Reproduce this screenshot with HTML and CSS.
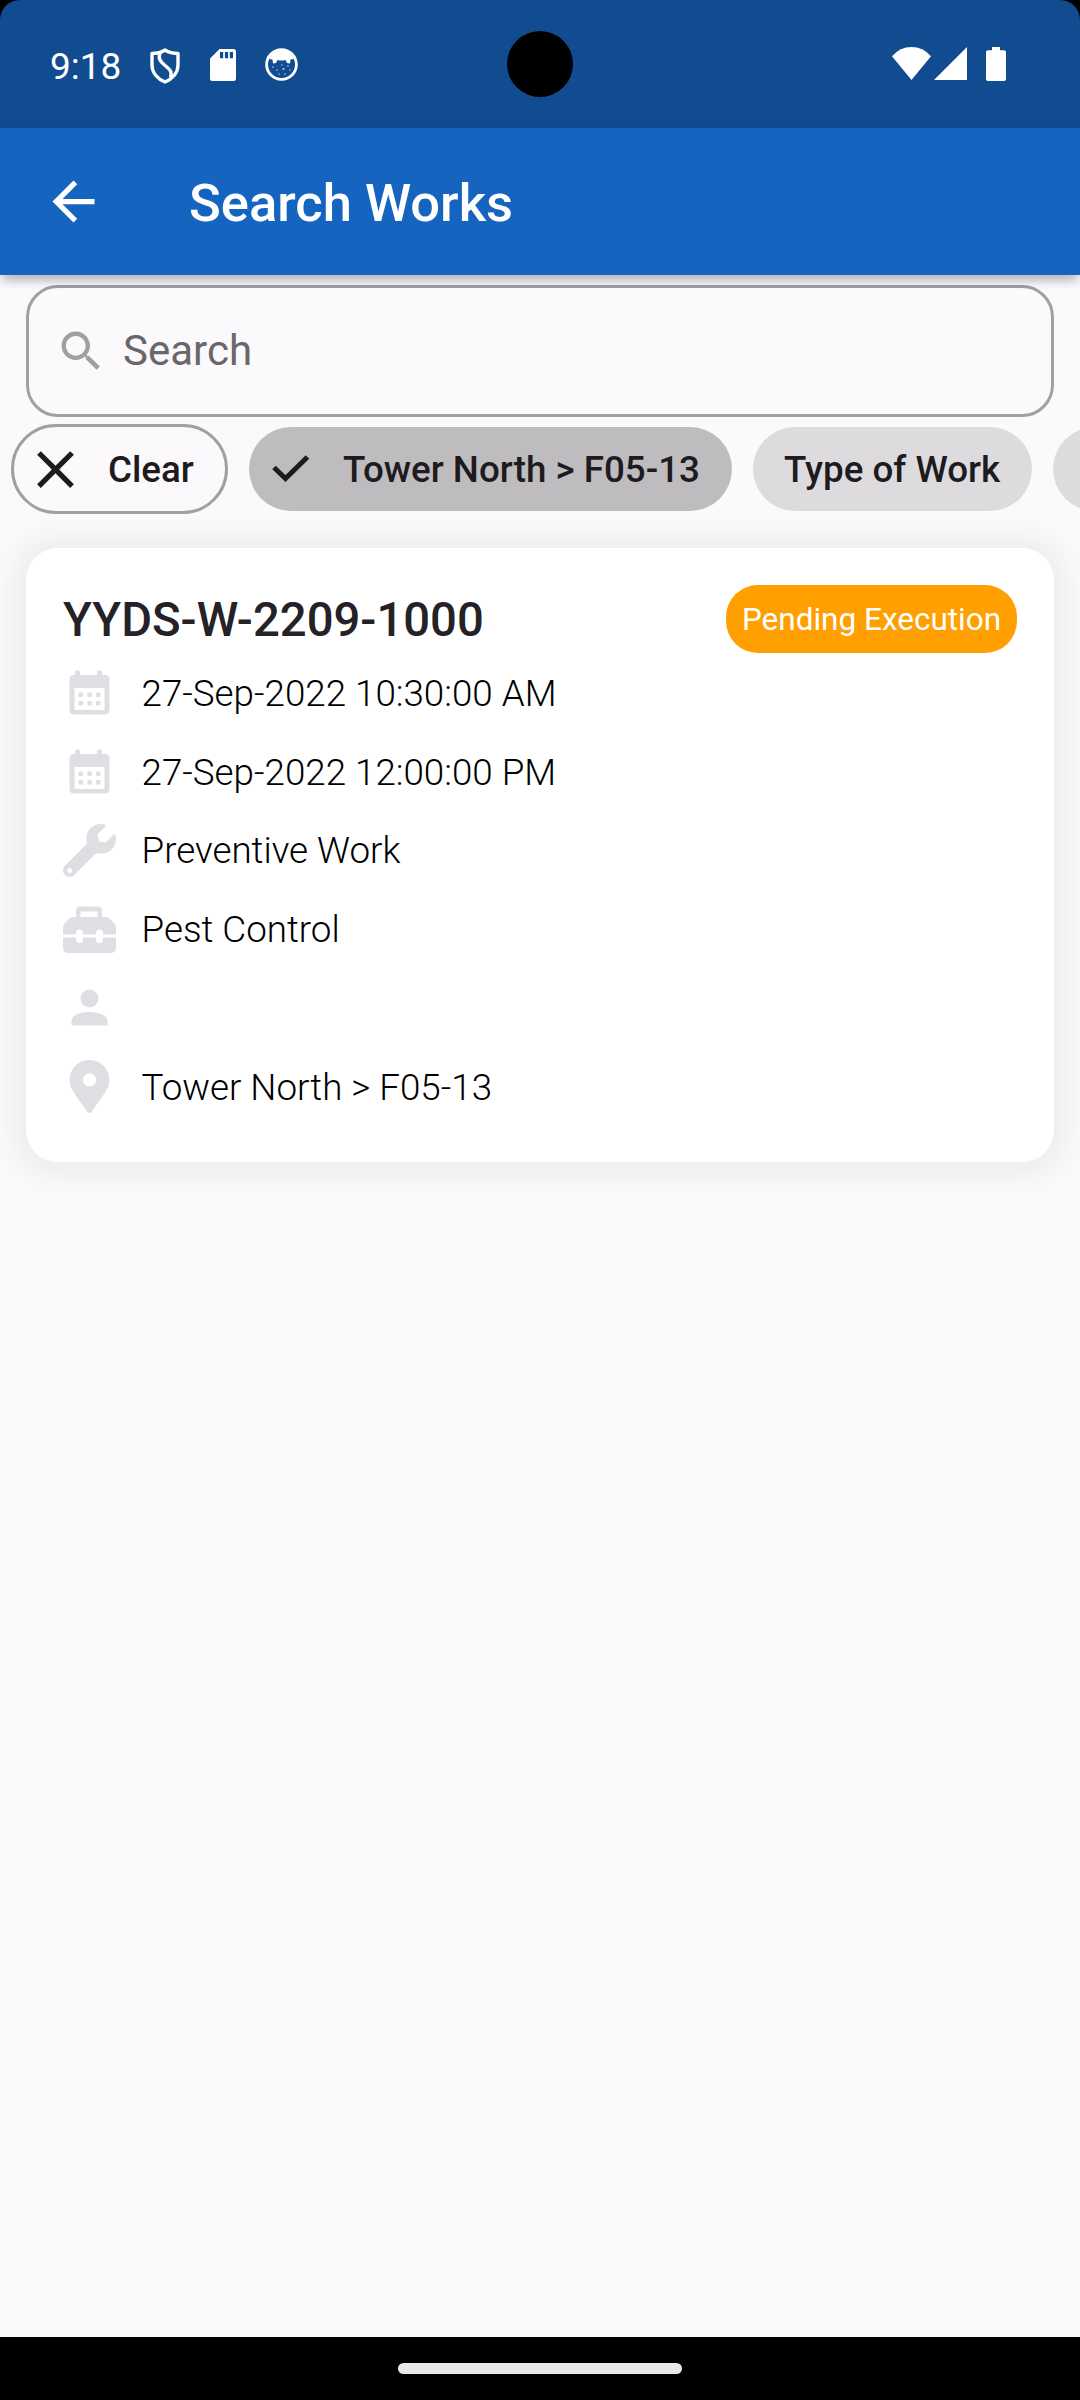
FILE: index.html
```html
<!DOCTYPE html>
<html lang="en">
<head>
<meta charset="utf-8">
<title>Search Works</title>
<link rel="stylesheet" href="styles.css">
</head>
<body>
<div class="screen">
  <header class="status-bar">
    <span class="clock">9:18</span>
    <svg class="icon-shield" viewBox="0 0 30 36" fill="none" stroke="#fff" stroke-width="3.4" stroke-linejoin="round"><path d="M15 2 C11 4.5 6.500 5.500 2 5.500 V17 C2 25 8 31 15 34 C22 31 28 25 28 17 V5.500 C23.500 5.500 19 4.500 15 2Z"/><path d="M10.500 4 C7.500 10 10 13.500 15 17.500 C20 21.500 22.500 24 20.500 29.500"/></svg>
    <svg class="icon-sd" viewBox="0 0 26 32"><path fill="#fff" fill-rule="evenodd" d="M9.500 0H23.500Q26 0 26 2.500V29.500Q26 32 23.500 32H2.500Q0 32 0 29.500V9.500ZM10 3V9.300H13.200V3ZM14.900 3V9.300H18.100V3ZM19.800 3V9.300H23V3Z"/></svg>
    <svg class="icon-face" viewBox="0 0 33 33"><circle cx="16.500" cy="16.500" r="14.900" fill="none" stroke="#fff" stroke-width="2.800"/><path fill="#fff" d="M4 11Q8 2 16.500 2T29 11L25.500 11.500 25 15.500 22 15 20.500 12Q16.500 13.200 12.500 12L11 15 8 15.500 7.500 11.500Z"/><g fill="#fff" opacity=".75"><circle cx="8" cy="19" r=".8"/><circle cx="12" cy="22" r=".8"/><circle cx="17" cy="17" r=".7"/><circle cx="18.500" cy="21" r="1"/><circle cx="23" cy="18" r=".8"/><circle cx="25" cy="22" r=".7"/><circle cx="14" cy="26" r=".7"/><circle cx="20" cy="26" r=".8"/></g></svg>
    <span class="camera"></span>
    <svg class="icon-wifi" viewBox="0 0 39 33"><path fill="#fff" d="M0 9.300Q8 0 19.500 0T39 9.300L19.500 33Z"/></svg>
    <svg class="icon-signal" viewBox="0 0 33 33"><path fill="#fff" d="M33 0V33H0Z"/></svg>
    <svg class="icon-battery" viewBox="0 0 20 34"><path fill="#fff" d="M6 0H14V3.300H18Q20 3.300 20 5.300V32Q20 34 18 34H2Q0 34 0 32V5.300Q0 3.300 2 3.300H6Z"/></svg>
  </header>

  <nav class="app-bar">
    <svg class="back" viewBox="0 0 24 24"><path fill="#fff" d="M20 11H7.830l5.590-5.590L12 4l-8 8 8 8 1.410-1.410L7.830 13H20v-2z"/></svg>
    <h1 class="app-title">Search Works</h1>
  </nav>

  <main class="content">
    <div class="search-box">
      <svg class="search-icon" viewBox="0 0 24 24"><path fill="#a09fa1" d="M15.500 14h-.790l-.280-.270C15.410 12.590 16 11.110 16 9.500 16 5.910 13.090 3 9.500 3S3 5.910 3 9.500 5.910 16 9.500 16c1.610 0 3.090-.590 4.230-1.570l.270.280v.790l5 4.990L20.490 19l-4.990-5zm-6 0C7.010 14 5 11.990 5 9.500S7.010 5 9.500 5 14 7.010 14 9.500 11.990 14 9.500 14z"/></svg>
      <span class="placeholder">Search</span>
    </div>

    <div class="chips">
      <div class="chip chip-clear">
        <svg class="close" viewBox="0 0 24 24"><path fill="#1d1b1e" d="M19 6.410L17.590 5 12 10.590 6.410 5 5 6.410 10.590 12 5 17.590 6.410 19 12 13.410 17.590 19 19 17.590 13.410 12z"/></svg>
        <span class="chip-label">Clear</span>
      </div>
      <div class="chip chip-selected">
        <svg class="check" viewBox="0 0 38 28"><path fill="none" stroke="#1d1b1e" stroke-width="5" d="M2 12.500L13.500 23.500L35.500 2"/></svg>
        <span class="chip-label">Tower North &gt; F05-13</span>
      </div>
      <div class="chip chip-type"><span class="chip-label">Type of Work</span></div>
      <div class="chip chip-more"></div>
    </div>

    <article class="card">
      <div class="card-head">
        <h2 class="work-id">YYDS-W-2209-1000</h2>
        <span class="badge">Pending Execution</span>
      </div>
      <ul class="details">
        <li class="row"><svg class="row-icon" viewBox="0 0 53 53"><path fill="#e0dee2" fill-rule="evenodd" d="M9 4.500H12V1.500Q12 0 13.500 0H15.500Q17 0 17 1.500V4.500H34V1.500Q34 0 35.500 0H37.500Q39 0 39 1.500V4.500H42Q46.500 4.500 46.500 9V39.500Q46.500 44 42 44H11Q6.500 44 6.500 39.500V9Q6.500 4.500 11 4.500ZM11.500 17.500V39.500H41.500V17.500Z" transform="translate(0 4.500)"/><g fill="#e0dee2"><rect x="15.500" y="26.500" width="4.500" height="4.500" rx="1"/><rect x="24.300" y="26.500" width="4.500" height="4.500" rx="1"/><rect x="33" y="26.500" width="4.500" height="4.500" rx="1"/><rect x="15.500" y="35" width="4.500" height="4.500" rx="1"/><rect x="24.300" y="35" width="4.500" height="4.500" rx="1"/><rect x="33" y="35" width="4.500" height="4.500" rx="1"/></g></svg><span>27-Sep-2022 10:30:00 AM</span></li>
        <li class="row"><svg class="row-icon" viewBox="0 0 53 53"><path fill="#e0dee2" fill-rule="evenodd" d="M9 4.500H12V1.500Q12 0 13.500 0H15.500Q17 0 17 1.500V4.500H34V1.500Q34 0 35.500 0H37.500Q39 0 39 1.500V4.500H42Q46.500 4.500 46.500 9V39.500Q46.500 44 42 44H11Q6.500 44 6.500 39.500V9Q6.500 4.500 11 4.500ZM11.500 17.500V39.500H41.500V17.500Z" transform="translate(0 4.500)"/><g fill="#e0dee2"><rect x="15.500" y="26.500" width="4.500" height="4.500" rx="1"/><rect x="24.300" y="26.500" width="4.500" height="4.500" rx="1"/><rect x="33" y="26.500" width="4.500" height="4.500" rx="1"/><rect x="15.500" y="35" width="4.500" height="4.500" rx="1"/><rect x="24.300" y="35" width="4.500" height="4.500" rx="1"/><rect x="33" y="35" width="4.500" height="4.500" rx="1"/></g></svg><span>27-Sep-2022 12:00:00 PM</span></li>
        <li class="row"><svg class="row-icon" viewBox="0 0 512 512"><path fill="#e0dee2" d="M507.730 109.100c-2.240-9.030-13.540-12.090-20.120-5.510l-74.360 74.360-67.880-11.310-11.310-67.880 74.360-74.360c6.620-6.620 3.430-17.900-5.660-20.160-47.380-11.740-99.550.910-136.580 37.930-39.640 39.640-50.550 97.100-34.050 147.200L18.740 402.760c-24.990 24.990-24.990 65.510 0 90.500 24.990 24.990 65.510 24.990 90.500 0l213.210-213.210c50.120 16.710 107.470 5.680 147.370-34.220 37.070-37.070 49.700-89.320 37.910-136.730zM64 472c-13.250 0-24-10.750-24-24 0-13.260 10.750-24 24-24s24 10.740 24 24c0 13.250-10.750 24-24 24z"/></svg><span>Preventive Work</span></li>
        <li class="row"><svg class="row-icon" viewBox="0 0 53 53"><path fill="#e0dee2" fill-rule="evenodd" d="M13 14V8Q13 3.500 17.500 3.500H34.500Q39 3.500 39 8V14H43Q45 14 46.500 15.500L51 20Q53 22 53 24.500V31.500H40V30Q40 26.500 36.500 26.500T33 30V31.500H20V30Q20 26.500 16.500 26.500T13 30V31.500H0V24.500Q0 22 2 20L6.500 15.500Q8 14 10 14ZM17.500 8.500V14H34.500V8.500ZM0 34.500H13V37Q13 40 16.500 40T20 37V34.500H33V37Q33 40 36.500 40T40 37V34.500H53V44Q53 50 47 50H6Q0 50 0 44Z"/></svg><span>Pest Control</span></li>
        <li class="row"><svg class="row-icon" viewBox="0 0 53 53"><circle cx="26.500" cy="17.500" r="9" fill="#e0dee2"/><path fill="#e0dee2" d="M8.500 44V40C8.500 34 18 31 26.500 31S44.500 34 44.500 40V44Q44.500 44.500 44 44.500H9Q8.500 44.500 8.500 44Z"/></svg></li>
        <li class="row"><svg class="row-icon" viewBox="-64 0 512 512"><path fill="#e0dee2" d="M172.268 501.670C26.970 291.031 0 269.413 0 192 0 85.961 85.961 0 192 0s192 85.961 192 192c0 77.413-26.970 99.031-172.268 309.670-9.535 13.774-29.930 13.773-39.464 0zM192 256c35.346 0 64-28.654 64-64s-28.654-64-64-64-64 28.654-64 64 28.654 64 64 64z"/></svg><span>Tower North &gt; F05-13</span></li>
      </ul>
    </article>
  </main>

  <footer class="nav-bar"><span class="handle"></span></footer>
</div>
</body>
</html>
```
FILE: styles.css
```css
* { box-sizing: border-box; }

body {
  margin: 0;
  background: #000;
  font-family: Roboto, "Noto Sans", sans-serif;
  color: #1d1b1e;
}

svg { display: block; flex: none; }

.screen {
  width: 1080px;
  height: 2400px;
  display: flex;
  flex-direction: column;
  overflow: hidden;
}

.status-bar {
  position: relative;
  height: 128px;
  flex: none;
  display: flex;
  align-items: flex-start;
  padding: 47px 74px 0 50px;
  border-radius: 20px 20px 0 0;
  background: #114c90;
}

.clock {
  width: 100px;
  height: 40px;
  line-height: 40px;
  font-size: 37px;
  color: #fff;
}

.icon-shield { width: 30px; height: 36px; margin-top: 1px; }
.icon-sd { width: 26px; height: 32px; margin: 2px 0 0 29.5px; }
.icon-face { width: 33px; height: 33px; margin: 1px 0 0 29px; }

.camera {
  position: absolute;
  left: 507px;
  top: 31px;
  width: 66px;
  height: 66px;
  border-radius: 50%;
  background: #000;
}

.icon-wifi { width: 39px; height: 33px; margin-left: auto; }
.icon-signal { width: 33px; height: 33px; margin-left: 3px; }
.icon-battery { width: 20px; height: 34px; margin-left: 19px; }

.app-bar {
  position: relative;
  z-index: 1;
  height: 147px;
  flex: none;
  display: flex;
  align-items: center;
  padding-left: 42px;
  background: #1565c0;
  box-shadow: 0 9px 9px -3px rgba(0, 0, 0, 0.2), 0 3px 12px rgba(0, 0, 0, 0.1);
}

.back { width: 63px; height: 63px; }

.app-title {
  margin: 2px 0 0 84px;
  font-size: 52.5px;
  line-height: 62px;
  font-weight: 500;
  color: #fff;
}

.content {
  flex: 1;
  min-height: 0;
  overflow: hidden;
  background: #fbf9fc;
  padding-top: 10px;
}

.search-box {
  height: 132px;
  margin: 0 26px;
  display: flex;
  align-items: center;
  padding-left: 26px;
  border: 3px solid #a09fa1;
  border-radius: 32px;
}

.search-icon { width: 52.5px; height: 52.5px; }

.placeholder {
  margin-left: 15.5px;
  font-size: 42px;
  line-height: 50px;
  color: #68676a;
}

.chips {
  display: flex;
  align-items: center;
  height: 90px;
  margin-top: 7px;
  padding-left: 10.5px;
  overflow: hidden;
}

.chip {
  flex: none;
  display: flex;
  align-items: center;
  height: 84px;
  border-radius: 42px;
  font-size: 36.75px;
  line-height: 44px;
  font-weight: 500;
  white-space: nowrap;
  background: #dddbde;
}

.chip-label { padding-top: 2px; }

.chip-clear {
  width: 217px;
  height: 90px;
  padding-left: 10.5px;
  border: 3px solid #a09fa1;
  border-radius: 45px;
  background: none;
}

.close { width: 63px; height: 63px; margin-right: 21px; }

.chip-selected {
  width: 483px;
  margin-left: 21px;
  padding-left: 23.5px;
  background: #bebcbf;
}

.check { width: 38px; height: 28px; margin-right: 33px; }

.chip-type { width: 279.5px; margin-left: 21px; padding-left: 31.5px; }
.chip-more { width: 200px; margin-left: 21px; }

.card {
  height: 614px;
  margin: 34px 26px 0;
  padding: 37px 37px 0;
  border-radius: 32px;
  background: #fff;
  box-shadow: 0 2px 28px 14px rgba(30, 25, 35, 0.05);
}

.card-head {
  display: flex;
  align-items: center;
  justify-content: space-between;
  height: 68px;
}

.work-id {
  margin: 2px 0 0;
  font-size: 47.25px;
  line-height: 56px;
  font-weight: 500;
  color: #242226;
}

.badge {
  width: 291px;
  height: 68px;
  padding-top: 1px;
  border-radius: 32px;
  background: #ffa000;
  color: #fff;
  font-size: 31.5px;
  line-height: 68px;
  text-align: center;
}

.details { margin: 1.5px 0 0; padding: 0; list-style: none; }

.row {
  display: flex;
  align-items: center;
  height: 78.75px;
  font-size: 36.75px;
  line-height: 44px;
  font-weight: 300;
  color: #000;
}

.row-icon { width: 53px; height: 53px; margin: 0 25.5px 2px 0; }

.nav-bar {
  height: 63px;
  flex: none;
  display: flex;
  justify-content: center;
  padding-top: 26px;
  background: #000;
}

.handle { width: 284px; height: 11px; border-radius: 6px; background: #eae8eb; }
```
